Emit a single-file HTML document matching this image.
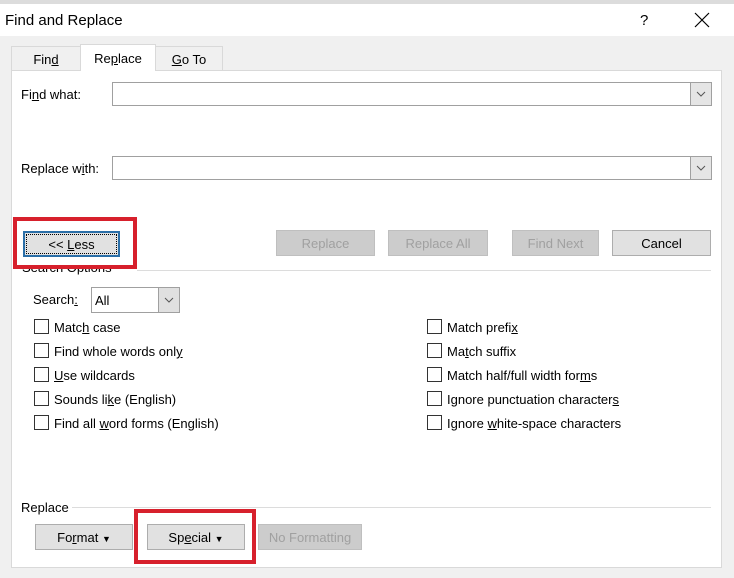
<!DOCTYPE html>
<html><head><style>
*{box-sizing:border-box;margin:0;padding:0}
body{width:734px;height:578px;background:#f0f0f0;font-family:"Liberation Sans",sans-serif;font-size:13px;color:#000;position:relative;overflow:hidden}
.a{position:absolute}
.title{left:0;top:0;width:734px;height:36px;background:#fff;border-top:4px solid #dcdcdc}
.btn{position:absolute;background:#e1e1e1;border:1px solid #adadad;text-align:center;line-height:25px;height:26px}
.dis{color:#a0a0a0;background:#cccccc;border-color:#bfbfbf}
.inp{position:absolute;background:#fff;border:1px solid #a0a0a0;height:24px}
.dd{position:absolute;right:0;top:0;width:21px;height:22px;background:#e5e5e5;border-left:1px solid #a0a0a0}
.cb{position:absolute;width:15px;height:15px;border:1px solid #333;background:#fff}
.lbl{position:absolute;line-height:16px;margin-top:1px}
.red{position:absolute;border:4px solid #d7202c}
u{text-decoration:underline}
</style></head><body>
<div class="a title"></div>
<div class="a" style="left:5px;top:12px;font-size:15px">Find and Replace</div>
<div class="a" style="left:640px;top:12px;font-size:15px">?</div>
<svg class="a" style="left:694px;top:12px" width="16" height="16"><path d="M1 1L15 15M15 1L1 15" stroke="#000" stroke-width="1.2"/></svg>

<div class="a" style="left:11px;top:46px;width:70px;height:25px;background:#f0f0f0;border:1px solid #d9d9d9;text-align:center;line-height:25px">Fin<u>d</u></div>
<div class="a" style="left:155px;top:46px;width:68px;height:25px;background:#f0f0f0;border:1px solid #d9d9d9;text-align:center;line-height:25px"><u>G</u>o To</div>
<div class="a" style="left:11px;top:70px;width:711px;height:498px;background:#fff;border:1px solid #d9d9d9"></div>
<div class="a" style="left:80px;top:44px;width:76px;height:27px;background:#fff;border:1px solid #d9d9d9;border-bottom:none;text-align:center;line-height:27px">Re<u>p</u>lace</div>

<div class="lbl" style="left:21px;top:86px">Fi<u>n</u>d what:</div>
<div class="inp" style="left:112px;top:82px;width:600px"><div class="dd"><svg width="20" height="22"><path d="M6 9l4 4 4-4" fill="none" stroke="#555"/></svg></div></div>
<div class="lbl" style="left:21px;top:160px">Replace w<u>i</u>th:</div>
<div class="inp" style="left:112px;top:156px;width:600px"><div class="dd"><svg width="20" height="22"><path d="M6 9l4 4 4-4" fill="none" stroke="#555"/></svg></div></div>

<div class="btn" style="left:23px;top:231px;width:97px;border:2px solid #2b6fa8;line-height:23px"><div style="position:absolute;left:1px;top:1px;right:1px;bottom:1px;border:1px dotted #000"></div>&lt;&lt; <u>L</u>ess</div>
<div class="red" style="left:13px;top:217px;width:124px;height:52px"></div>
<div class="btn dis" style="left:276px;top:230px;width:99px">Replace</div>
<div class="btn dis" style="left:388px;top:230px;width:100px">Replace All</div>
<div class="btn dis" style="left:512px;top:230px;width:87px">Find Next</div>
<div class="btn" style="left:612px;top:230px;width:99px">Cancel</div>

<div class="a" style="left:137px;top:270px;width:574px;height:1px;background:#dcdcdc"></div>
<div class="a" style="left:22px;top:269px;height:8px;overflow:hidden;line-height:8px"><span style="position:relative;top:-5px">Search Options</span></div>

<div class="lbl" style="left:33px;top:291px">Search<u>:</u></div>
<div class="inp" style="left:91px;top:287px;width:89px;height:26px;border-color:#a0a0a0"><span style="position:absolute;left:3px;top:5px">All</span><div class="dd" style="height:24px;background:#e0e0e0"><svg width="20" height="24"><path d="M6 10l4 4 4-4" fill="none" stroke="#555"/></svg></div></div>

<div class="cb" style="left:34px;top:319px"></div><div class="lbl" style="left:54px;top:319px">Matc<u>h</u> case</div>
<div class="cb" style="left:34px;top:343px"></div><div class="lbl" style="left:54px;top:343px">Find whole words onl<u>y</u></div>
<div class="cb" style="left:34px;top:367px"></div><div class="lbl" style="left:54px;top:367px"><u>U</u>se wildcards</div>
<div class="cb" style="left:34px;top:391px"></div><div class="lbl" style="left:54px;top:391px">Sounds li<u>k</u>e (English)</div>
<div class="cb" style="left:34px;top:415px"></div><div class="lbl" style="left:54px;top:415px">Find all <u>w</u>ord forms (English)</div>

<div class="cb" style="left:427px;top:319px"></div><div class="lbl" style="left:447px;top:319px">Match prefi<u>x</u></div>
<div class="cb" style="left:427px;top:343px"></div><div class="lbl" style="left:447px;top:343px">Ma<u>t</u>ch suffix</div>
<div class="cb" style="left:427px;top:367px"></div><div class="lbl" style="left:447px;top:367px">Match half/full width for<u>m</u>s</div>
<div class="cb" style="left:427px;top:391px"></div><div class="lbl" style="left:447px;top:391px">Ignore punctuation character<u>s</u></div>
<div class="cb" style="left:427px;top:415px"></div><div class="lbl" style="left:447px;top:415px">Ignore <u>w</u>hite-space characters</div>

<div class="lbl" style="left:21px;top:499px">Replace</div>
<div class="a" style="left:72px;top:507px;width:639px;height:1px;background:#dcdcdc"></div>
<div class="btn" style="left:35px;top:524px;width:98px">Fo<u>r</u>mat <span style="font-size:9px">▼</span></div>
<div class="btn" style="left:147px;top:524px;width:98px">Sp<u>e</u>cial <span style="font-size:9px">▼</span></div>
<div class="btn dis" style="left:258px;top:524px;width:104px">No Formatting</div>
<div class="red" style="left:134px;top:509px;width:122px;height:55px"></div>
</body></html>
